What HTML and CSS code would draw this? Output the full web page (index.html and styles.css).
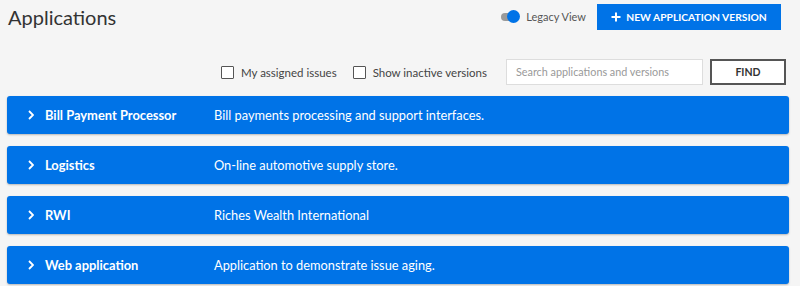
FILE: index.html
```html
<!DOCTYPE html>
<html>
<head>
<meta charset="utf-8">
<link rel="stylesheet" href="styles.css">
</head>
<body>
<div class="page">
  <div class="header">
    <h1 class="title">Applications</h1>
    <div class="actions">
      <div class="toggle"><span class="track"></span><span class="knob"></span></div>
      <span class="toggle-label">Legacy View</span>
      <button class="primary">
        <svg width="10" height="10" viewBox="0 0 10 10"><path d="M5 0.5V9.5M0.5 5H9.5" stroke="#fff" stroke-width="2"/></svg>
        NEW APPLICATION VERSION
      </button>
    </div>
  </div>
  <div class="filters">
    <label class="check"><span class="box"></span>My assigned issues</label>
    <label class="check"><span class="box"></span>Show inactive versions</label>
    <div class="search">Search applications and versions</div>
    <button class="find">FIND</button>
  </div>
  <div class="list">
    <div class="row"><span class="chev"><svg width="6" height="10" viewBox="0 0 6 10"><path d="M1 1L5 5L1 9" fill="none" stroke="#fff" stroke-width="1.8"/></svg></span><span class="name">Bill Payment Processor</span><span class="desc">Bill payments processing and support interfaces.</span></div>
    <div class="row"><span class="chev"><svg width="6" height="10" viewBox="0 0 6 10"><path d="M1 1L5 5L1 9" fill="none" stroke="#fff" stroke-width="1.8"/></svg></span><span class="name">Logistics</span><span class="desc">On-line automotive supply store.</span></div>
    <div class="row"><span class="chev"><svg width="6" height="10" viewBox="0 0 6 10"><path d="M1 1L5 5L1 9" fill="none" stroke="#fff" stroke-width="1.8"/></svg></span><span class="name">RWI</span><span class="desc">Riches Wealth International</span></div>
    <div class="row"><span class="chev"><svg width="6" height="10" viewBox="0 0 6 10"><path d="M1 1L5 5L1 9" fill="none" stroke="#fff" stroke-width="1.8"/></svg></span><span class="name">Web application</span><span class="desc">Application to demonstrate issue aging.</span></div>
  </div>
</div>
</body>
</html>
```

FILE: styles.css
```css
* { box-sizing: border-box; }
html, body { margin: 0; padding: 0; background: #f5f5f5; }
body { font-family: "Lato", "Open Sans", sans-serif; color: #333; width: 800px; height: 286px; overflow: hidden; }
.page { padding: 0 11px 0 7px; }
.header { display: flex; justify-content: space-between; align-items: center; height: 33px; padding-top: 0; }
.title { margin: 0 0 0 1px; font-size: 20px; font-weight: 400; color: #333; letter-spacing: 0; }
.actions { display: flex; align-items: center; margin-right: 8px; }
.toggle { position: relative; width: 19px; height: 14px; margin-right: 6px; }
.track { position: absolute; left: 0; top: 3px; width: 17px; height: 8px; border-radius: 4px; background: #9a9a9a; }
.knob { position: absolute; left: 6px; top: 0; width: 13px; height: 13px; border-radius: 50%; background: #0073e7; }
.toggle-label { font-size: 11px; color: #555; margin-right: 11px; }
button { font-family: inherit; cursor: pointer; }
.primary { display: flex; align-items: center; justify-content: center; gap: 5px; width: 184px; height: 26px; background: #0073e7; color: #fff; border: none; font-size: 10.3px; font-weight: 700; letter-spacing: 0; padding: 0; }
.filters { display: flex; align-items: center; justify-content: flex-end; height: 26px; margin-top: 26px; margin-right: 3px; }
.check { display: flex; align-items: center; font-size: 11.5px; color: #444; margin-right: 16px; }
.check:nth-child(2) { margin-right: 19px; }
.box { width: 13px; height: 13px; border: 1px solid #555; background: #fff; margin-right: 7px; border-radius: 1px; }
.search { width: 197px; height: 26px; border: 1px solid #ddd; background: #fff; font-size: 10.8px; color: #999; padding: 5px 9px; }
.find { width: 76px; height: 26px; margin-left: 7px; border: 2px solid #555; background: #fff; font-size: 10.5px; font-weight: 700; color: #333; }
.list { display: flex; flex-direction: column; gap: 12px; margin-top: 11px; }
.row { display: flex; align-items: center; height: 38px; background: #0073e7; border-radius: 3px; box-shadow: 0 1px 2px rgba(0,0,0,0.25); color: #fff; padding-left: 21px; font-size: 12.8px; }
.chev { display: flex; width: 17px; }
.name { width: 169px; font-weight: 700; font-size: 12.9px; }
.desc { font-weight: 400; }
```
